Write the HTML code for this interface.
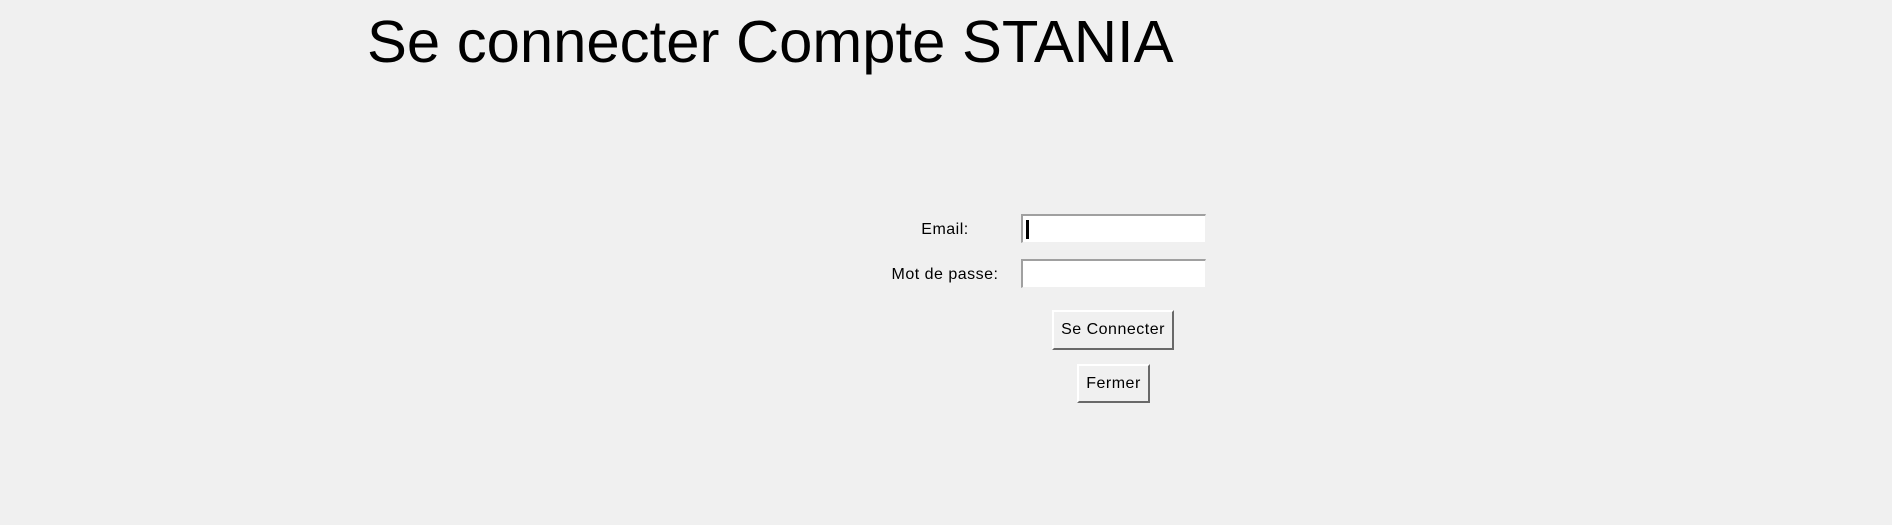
<!DOCTYPE html>
<html><head><meta charset="utf-8"><style>
html,body{margin:0;padding:0;width:1892px;height:525px;background:#f0f0f0;overflow:hidden;font-family:"Liberation Sans","DejaVu Sans",sans-serif;}
.t{position:absolute;left:367px;top:6px;font-size:59.8px;color:#000;white-space:nowrap;line-height:72px;}
.l{position:absolute;font-size:16px;letter-spacing:0.5px;color:#000;white-space:nowrap;text-align:center;width:110px;}
.in{position:absolute;background:#fff;border-top:2px solid #a0a0a0;border-left:2px solid #a0a0a0;border-bottom:1px solid #f0f0f0;border-right:1px solid #f0f0f0;box-sizing:border-box;}
.b{position:absolute;background:#f0f0f0;box-sizing:border-box;border-top:2px solid #fff;border-left:2px solid #fff;border-right:2px solid #696969;border-bottom:2px solid #696969;font-size:16px;letter-spacing:0.5px;text-align:center;color:#000;white-space:nowrap;}
</style></head><body>
<div class="t">Se connecter Compte STANIA</div>
<div class="l" style="left:890px;top:221px;">Email:</div>
<div class="l" style="left:890px;top:266px;">Mot de passe:</div>
<div class="in" style="left:1021px;top:214px;width:185px;height:29px;"><div style="position:absolute;left:3px;top:4px;width:3px;height:19px;background:#000"></div></div>
<div class="in" style="left:1021px;top:259px;width:185px;height:29px;"></div>
<div class="b" style="left:1052px;top:310px;width:122px;height:40px;line-height:36px;">Se Connecter</div>
<div class="b" style="left:1077px;top:364px;width:73px;height:39px;line-height:35px;">Fermer</div>
</body></html>
